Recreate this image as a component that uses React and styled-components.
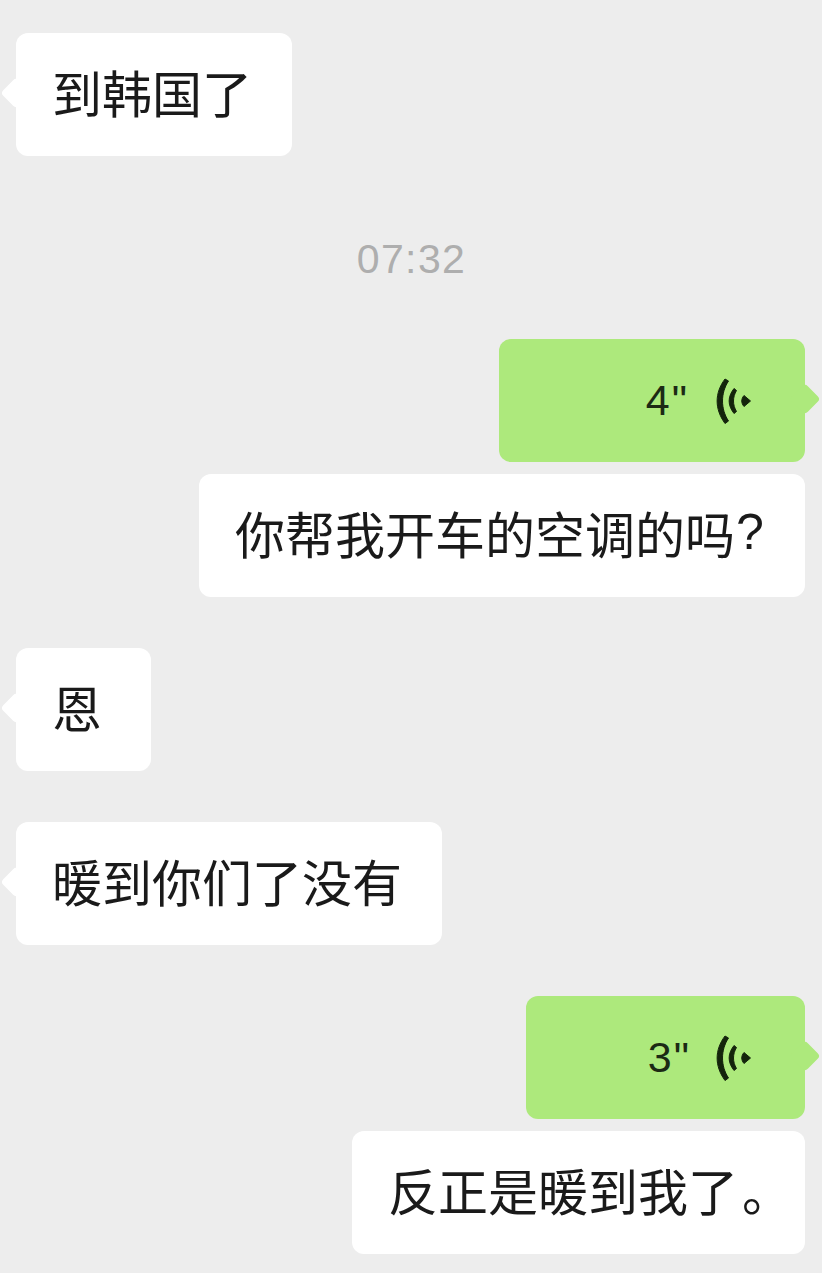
import React from "react";
import styled, { createGlobalStyle } from "styled-components";

const GlobalStyle = createGlobalStyle`
  html, body {
    margin: 0;
    padding: 0;
    background: #ededed;
  }
`;

const Page = styled.div`
  width: 822px;
  height: 1273px;
  box-sizing: border-box;
  padding: 33px 17px 0 16px;
  display: flex;
  flex-direction: column;
  overflow: hidden;
  background: #ededed;
  font-family: "Liberation Sans", "Noto Sans CJK SC", sans-serif;
`;

const Row = styled.div`
  display: flex;
  justify-content: ${(p) => (p.$mine ? "flex-end" : "flex-start")};
  margin-top: ${(p) => p.$gap || 0}px;
`;

const Bubble = styled.div`
  position: relative;
  box-sizing: border-box;
  height: 123px;
  min-width: 135px;
  padding: 0 40px 7px 36px;
  display: flex;
  align-items: center;
  border-radius: 12px;
  background: ${(p) => (p.$voice ? "#ade97c" : "#ffffff")};
  color: #1a1a1a;
  font-family: "Liberation Sans", "Noto Sans CJK SC", sans-serif;
  font-size: 50px;
  white-space: nowrap;

  ${(p) =>
    p.$tail &&
    `
    &::before {
      content: "";
      position: absolute;
      top: calc(50% - 1.5px);
      ${p.$tail}: -11px;
      width: 22px;
      height: 22px;
      border-radius: 4px;
      background: inherit;
      transform: translateY(-50%) rotate(45deg);
    }
  `}
`;

const VoiceBubble = styled(Bubble)`
  justify-content: flex-end;
  padding: 0 51px 0 0;
`;

// punctuation is set narrower or wider than the font gives it
const Mark = styled.span`
  display: inline-block;
  box-sizing: border-box;
  width: ${(p) => p.$width}px;
  padding-left: ${(p) => p.$inset || 0}px;
`;

const Seconds = styled.span`
  font-family: "Liberation Sans", sans-serif;
  font-size: 43px;
  letter-spacing: 2px;
  color: #1c2a14;
  margin-right: ${(p) => p.$space}px;
`;

const Time = styled.div`
  margin-top: 78px;
  height: 50px;
  line-height: 50px;
  padding-left: 2px;
  text-align: center;
  color: #aeaeae;
  font-size: 41px;
  letter-spacing: 1.4px;
`;

const WaveSvg = styled.svg`
  display: block;
  flex: none;
`;

const Wave = () => (
  <WaveSvg width="40" height="50" viewBox="14 0 40 50" fill="#14240c" stroke="#14240c" strokeWidth="1" strokeLinejoin="round">
    <path d="M25 3L28.500 5C20.500 17 20.500 33 28.500 45L25 47.500C14.500 33 14.500 17 25 3Z" />
    <path d="M34 12.500L36.500 14.500C32.500 21 32.500 29 36.500 35.500L34 37.500C27.500 29 27.500 21 34 12.500Z" />
    <path d="M44 19.500L50.500 25L44 30.500C41 27 41 23 44 19.500Z" />
  </WaveSvg>
);

export default function App() {
  return (
    <Page>
      <GlobalStyle />
      <Row>
        <Bubble $tail="left">到韩国了</Bubble>
      </Row>
      <Time>07:32</Time>
      <Row $mine $gap={55}>
        <VoiceBubble $voice $tail="right" style={{ width: 306 }}>
          <Seconds $space={25}>4"</Seconds>
          <Wave />
        </VoiceBubble>
      </Row>
      <Row $mine $gap={12}>
        <Bubble>你帮我开车的空调的吗<Mark $width={30} $inset={1}>?</Mark></Bubble>
      </Row>
      <Row $gap={51}>
        <Bubble $tail="left">恩</Bubble>
      </Row>
      <Row $gap={51}>
        <Bubble $tail="left">暖到你们了没有</Bubble>
      </Row>
      <Row $mine $gap={51}>
        <VoiceBubble $voice $tail="right" style={{ width: 279 }}>
          <Seconds $space={23}>3"</Seconds>
          <Wave />
        </VoiceBubble>
      </Row>
      <Row $mine $gap={12}>
        <Bubble>反正是暖到我了<Mark $width={27} $inset={4}>。</Mark></Bubble>
      </Row>
    </Page>
  );
}
